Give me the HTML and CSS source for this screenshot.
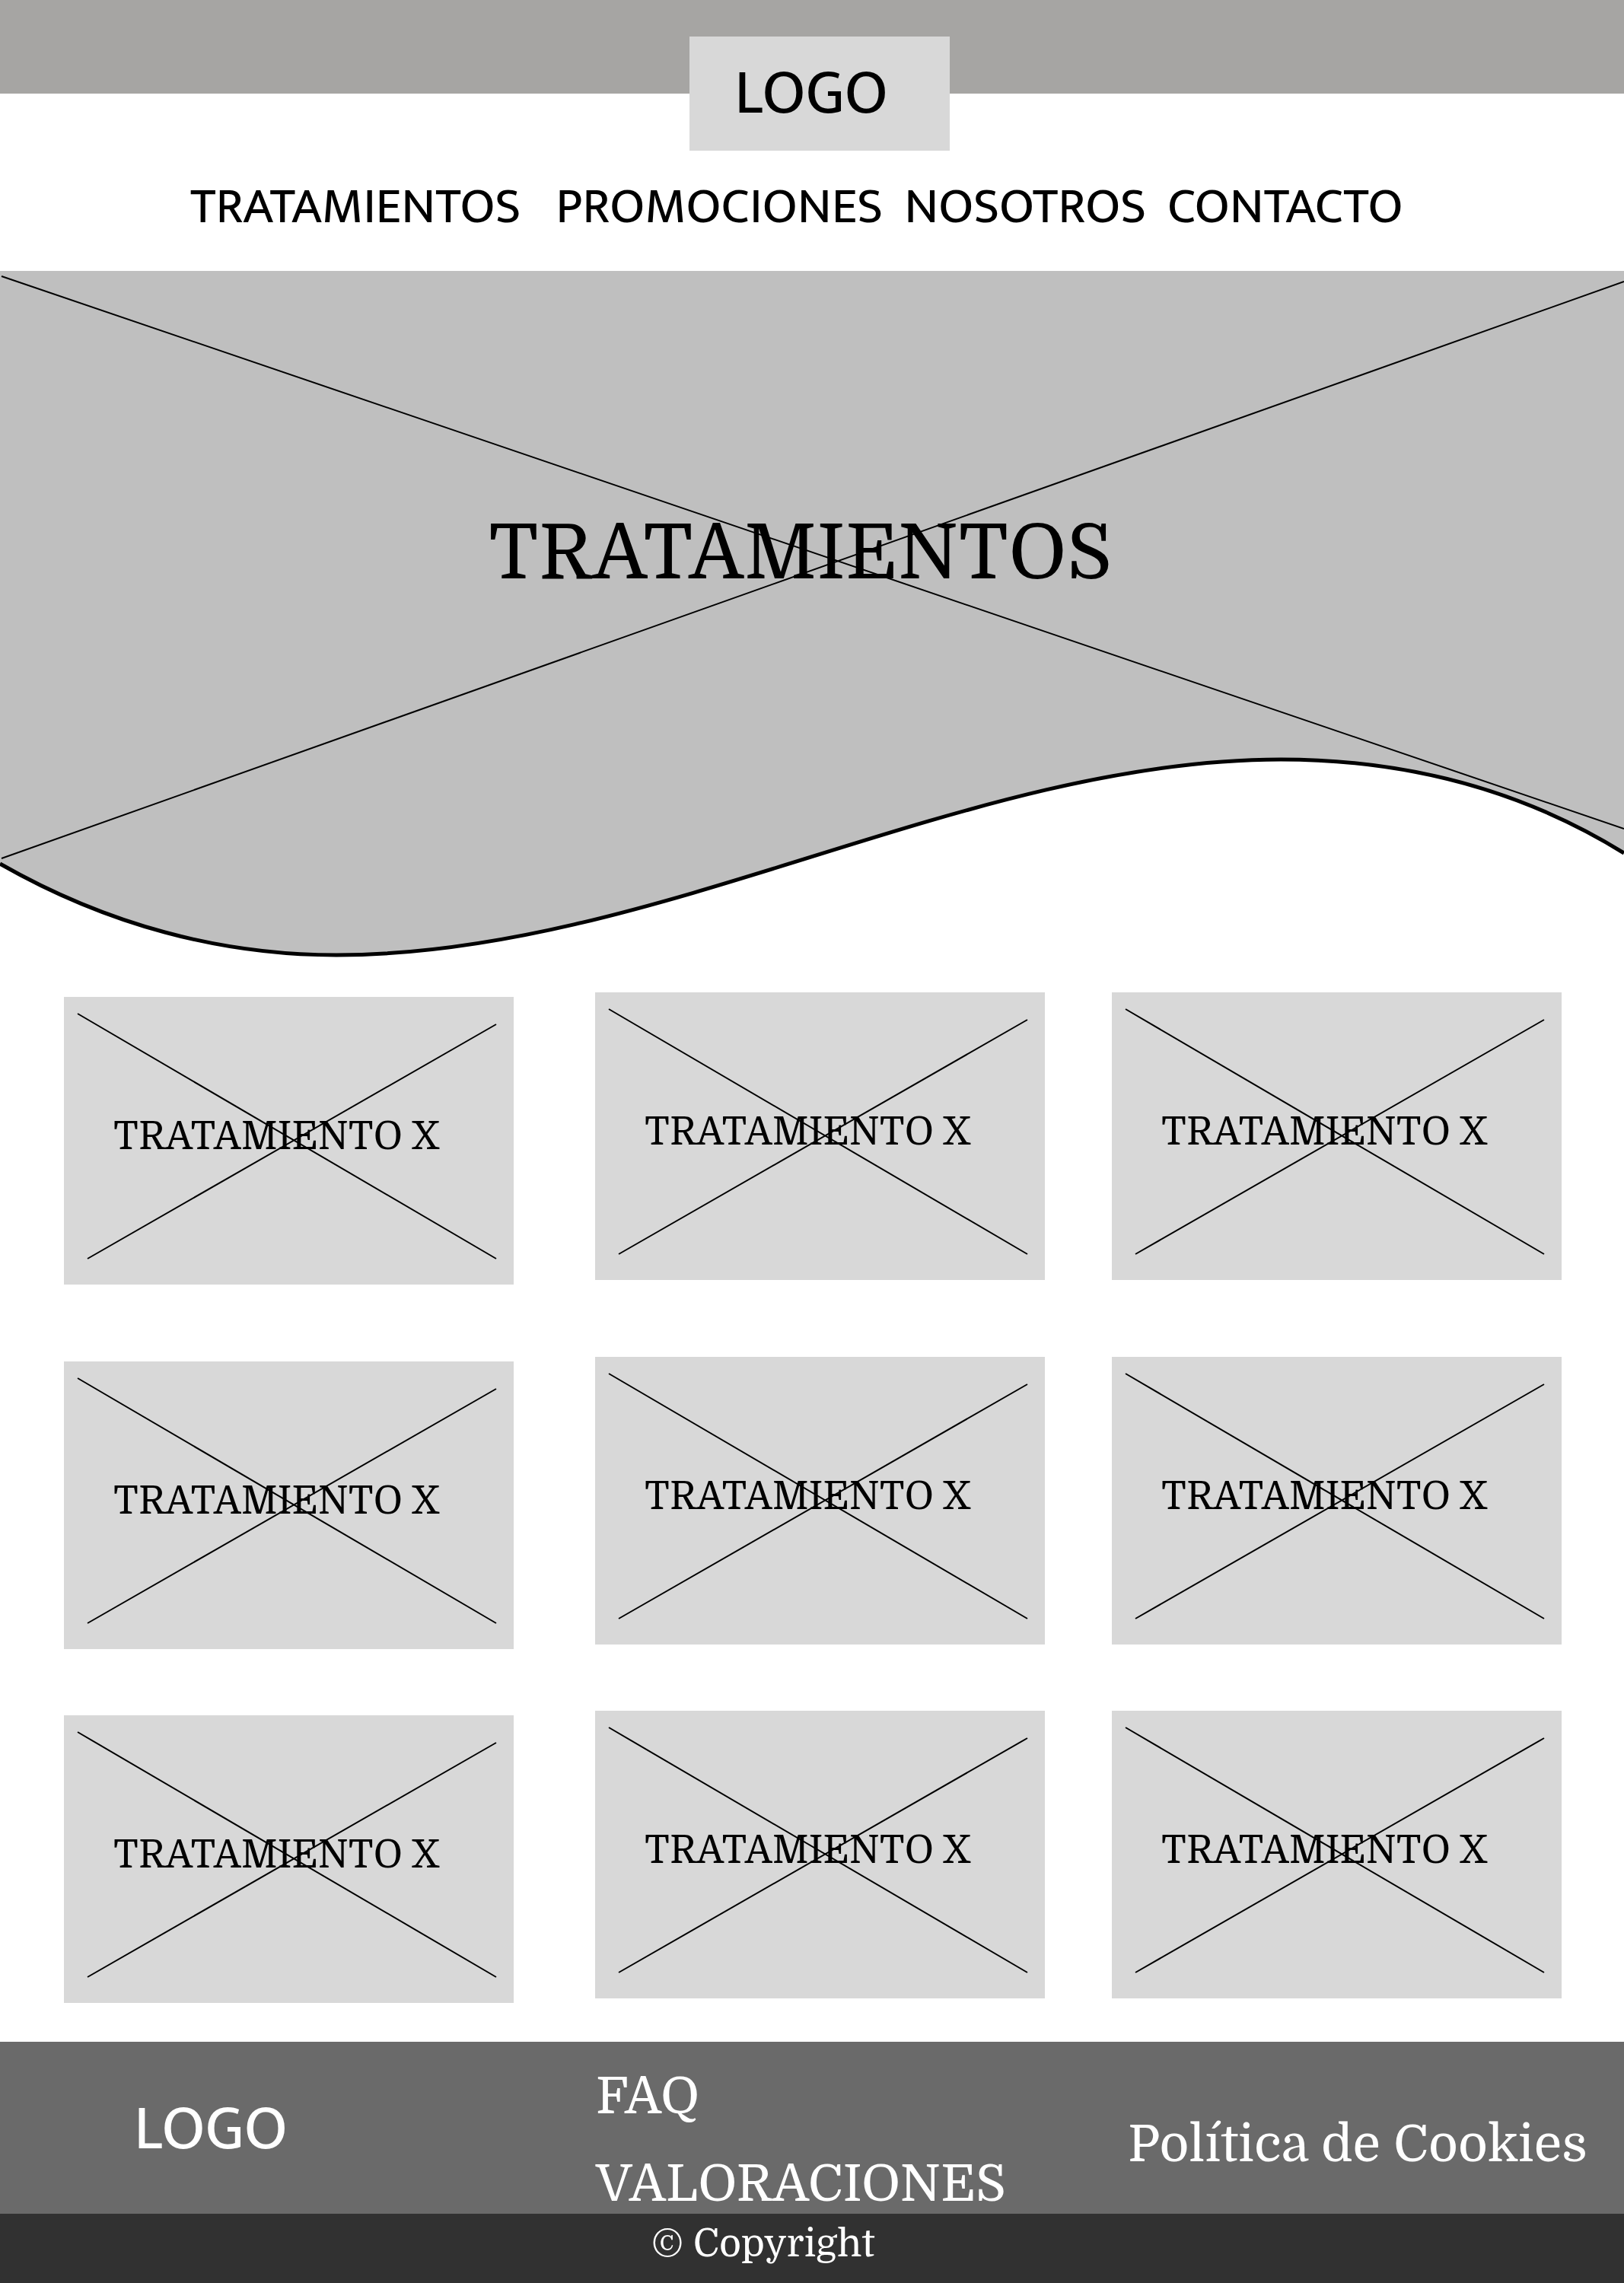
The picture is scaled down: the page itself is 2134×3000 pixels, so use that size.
FILE: index.html
```html
<!DOCTYPE html>
<html lang="es">
<head>
<meta charset="utf-8">
<meta name="viewport" content="width=device-width, initial-scale=1">
<title>Tratamientos</title>
<link rel="stylesheet" href="styles.css">
</head>
<body>
<svg class="defs" aria-hidden="true">
  <symbol id="cross" viewBox="0 0 591 378" preserveAspectRatio="none">
    <path d="M18 22 568 344M31 344 568 36" fill="none" stroke="#000" stroke-width="2"/>
  </symbol>
</svg>

<header>
  <div class="topbar"><a class="logo" href="#">LOGO</a></div>
  <nav class="menu">
    <a href="#">TRATAMIENTOS</a>
    <a href="#">PROMOCIONES</a>
    <a href="#">NOSOTROS</a>
    <a href="#">CONTACTO</a>
  </nav>
</header>

<main>
  <section class="hero">
    <svg class="hero-art" viewBox="0 0 2134 902" preserveAspectRatio="none" aria-hidden="true">
      <path d="M0 0H2134V765C2000 682 1850 642 1683 642C1270 642 860 899 442 899C290 899 140 859 0 779Z" fill="#bfbfbf"/>
      <path d="M2134 765C2000 682 1850 642 1683 642C1270 642 860 899 442 899C290 899 140 859 0 779" fill="none" stroke="#000" stroke-width="5"/>
      <path d="M2 7 2134 733M2134 14 2 772" fill="none" stroke="#000" stroke-width="2"/>
    </svg>
    <h1 class="hero-title">TRATAMIENTOS</h1>
  </section>

  <section class="cards">
    <a class="card" href="#"><svg class="cross"><use href="#cross"/></svg><span class="card-name">TRATAMIENTO X</span></a>
    <a class="card" href="#"><svg class="cross"><use href="#cross"/></svg><span class="card-name">TRATAMIENTO X</span></a>
    <a class="card" href="#"><svg class="cross"><use href="#cross"/></svg><span class="card-name">TRATAMIENTO X</span></a>
    <a class="card" href="#"><svg class="cross"><use href="#cross"/></svg><span class="card-name">TRATAMIENTO X</span></a>
    <a class="card" href="#"><svg class="cross"><use href="#cross"/></svg><span class="card-name">TRATAMIENTO X</span></a>
    <a class="card" href="#"><svg class="cross"><use href="#cross"/></svg><span class="card-name">TRATAMIENTO X</span></a>
    <a class="card" href="#"><svg class="cross"><use href="#cross"/></svg><span class="card-name">TRATAMIENTO X</span></a>
    <a class="card" href="#"><svg class="cross"><use href="#cross"/></svg><span class="card-name">TRATAMIENTO X</span></a>
    <a class="card" href="#"><svg class="cross"><use href="#cross"/></svg><span class="card-name">TRATAMIENTO X</span></a>
  </section>
</main>

<footer>
  <div class="footer-main">
    <a class="footer-logo" href="#">LOGO</a>
    <div class="footer-links">
      <a href="#">FAQ</a>
      <a href="#">VALORACIONES</a>
    </div>
    <a class="footer-legal" href="#">Política de Cookies</a>
  </div>
  <p class="copyright">© Copyright</p>
</footer>
</body>
</html>
```
FILE: styles.css
```css
:root {
  --sans: "Mukta", "Noto Sans", sans-serif;
  --serif: "Domine", "Noto Serif", "DejaVu Serif", serif;
}

* { box-sizing: border-box; }

body {
  margin: 0;
  background: #fff;
  color: #000;
  font-family: var(--serif);
}

a { color: inherit; text-decoration: none; white-space: nowrap; }

.defs { display: none; }

/* Header */
.topbar {
  display: flex;
  justify-content: center;
  height: 123px;
  padding: 48px 0 0 20px;
  background: #a6a5a3;
}

.logo {
  flex: none;
  width: 342px;
  height: 150px;
  padding-left: 59px;
  background: #d8d8d8;
  font: 83px/150px var(--sans);
}

.menu {
  display: flex;
  gap: 28px;
  margin-top: 75px;
  padding: 0 0 10px 250px;
  font: 67px/148px var(--sans);
}

.menu a:first-child { margin-right: 18px; }

/* Hero */
.hero { display: grid; }

.hero-art,
.hero-title { grid-area: 1 / 1; }

.hero-art { display: block; width: 100%; height: 902px; }

.hero-title {
  margin: 0;
  padding: 311px 0 0 642px;
  font-size: 100px;
  font-weight: 400;
  line-height: 120px;
}

/* Treatment cards */
.cards {
  display: grid;
  grid-template-columns: 591fr 107px 591fr 88px 591fr;
  grid-template-rows: auto 95px auto 81px auto;
  padding: 46px 82px 51px 84px;
}

.card { display: grid; background: #d8d8d8; aspect-ratio: 591 / 378; }

.card:nth-child(3n + 1) { grid-column: 1; margin-top: 6px; }
.card:nth-child(3n + 2) { grid-column: 3; margin-bottom: 6px; }
.card:nth-child(3n) { grid-column: 5; margin-bottom: 6px; }
.card:nth-child(n + 1):nth-child(-n + 3) { grid-row: 1; }
.card:nth-child(n + 4):nth-child(-n + 6) { grid-row: 3; }
.card:nth-child(n + 7) { grid-row: 5; }

.cross,
.card-name { grid-area: 1 / 1; }

.cross { width: 100%; height: 100%; }

.card-name {
  padding: 154px 0 0 65px;
  font-size: 50px;
  line-height: 60px;
}

/* Footer */
.footer-main {
  display: grid;
  grid-template-columns: 607fr 699fr 652fr;
  height: 226px;
  padding-left: 176px;
  background: #6a6a6a;
  color: #fff;
}

.footer-logo { padding-top: 65px; font: 83px/100px var(--sans); }

.footer-links {
  display: flex;
  flex-direction: column;
  gap: 35px;
  padding-top: 32px;
  font-size: 67px;
  line-height: 80px;
}

.footer-legal { padding-top: 95px; font-size: 67px; line-height: 80px; }

.copyright {
  margin: 0;
  padding: 2px 0 13px 856px;
  background: #313131;
  color: #fff;
  font-size: 50px;
  line-height: 76px;
}
```
